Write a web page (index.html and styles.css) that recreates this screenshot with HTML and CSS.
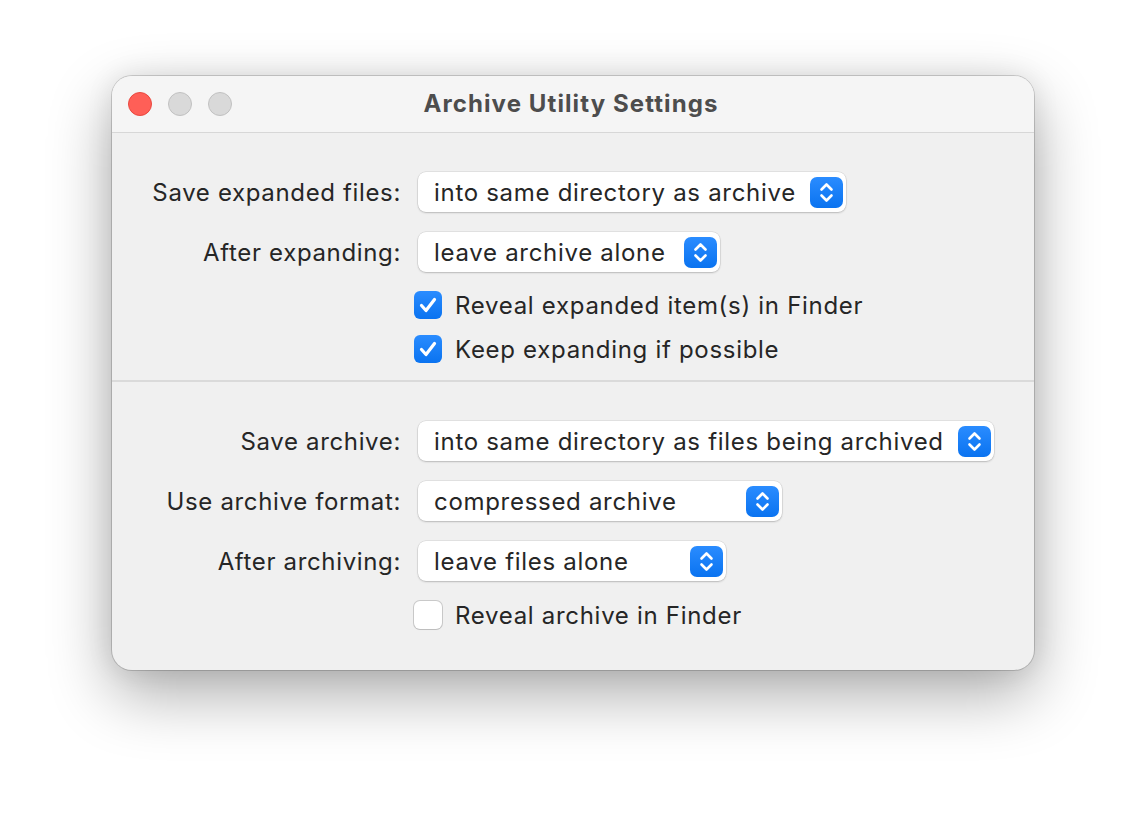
FILE: index.html
```html
<!DOCTYPE html>
<html>
<head>
<meta charset="utf-8">
<link rel="stylesheet" href="styles.css">
</head>
<body>
<div class="window">
  <div class="titlebar">
    <div class="lights">
      <span class="light red"></span>
      <span class="light grey"></span>
      <span class="light grey"></span>
    </div>
    <div class="title">Archive Utility Settings</div>
  </div>
  <div class="section first">
    <div class="row">
      <div class="label">Save expanded files:</div>
      <div class="popup w1"><span class="ptext">into same directory as archive</span><span class="stepper"><svg width="33" height="31" viewBox="0 0 33 31"><path d="M11.5 12.5 L16.5 7.5 L21.5 12.5 M11.5 18.5 L16.5 23.5 L21.5 18.5" fill="none" stroke="#fff" stroke-width="2.6" stroke-linecap="round" stroke-linejoin="round"/></svg></span></div>
    </div>
    <div class="row">
      <div class="label">After expanding:</div>
      <div class="popup w2"><span class="ptext">leave archive alone</span><span class="stepper"><svg width="33" height="31" viewBox="0 0 33 31"><path d="M11.5 12.5 L16.5 7.5 L21.5 12.5 M11.5 18.5 L16.5 23.5 L21.5 18.5" fill="none" stroke="#fff" stroke-width="2.6" stroke-linecap="round" stroke-linejoin="round"/></svg></span></div>
    </div>
    <div class="crow c1">
      <div class="label"></div>
      <div class="check on"><svg width="28" height="28" viewBox="0 0 28 28"><path d="M7.5 14.5 L12 19.5 L20.5 8.5" fill="none" stroke="#fff" stroke-width="3.2" stroke-linecap="round" stroke-linejoin="round"/></svg></div>
      <div class="ctext">Reveal expanded item(s) in Finder</div>
    </div>
    <div class="crow">
      <div class="label"></div>
      <div class="check on"><svg width="28" height="28" viewBox="0 0 28 28"><path d="M7.5 14.5 L12 19.5 L20.5 8.5" fill="none" stroke="#fff" stroke-width="3.2" stroke-linecap="round" stroke-linejoin="round"/></svg></div>
      <div class="ctext">Keep expanding if possible</div>
    </div>
  </div>
  <div class="divider"></div>
  <div class="section second">
    <div class="row">
      <div class="label">Save archive:</div>
      <div class="popup w3"><span class="ptext">into same directory as files being archived</span><span class="stepper"><svg width="33" height="31" viewBox="0 0 33 31"><path d="M11.5 12.5 L16.5 7.5 L21.5 12.5 M11.5 18.5 L16.5 23.5 L21.5 18.5" fill="none" stroke="#fff" stroke-width="2.6" stroke-linecap="round" stroke-linejoin="round"/></svg></span></div>
    </div>
    <div class="row">
      <div class="label">Use archive format:</div>
      <div class="popup w4"><span class="ptext">compressed archive</span><span class="stepper"><svg width="33" height="31" viewBox="0 0 33 31"><path d="M11.5 12.5 L16.5 7.5 L21.5 12.5 M11.5 18.5 L16.5 23.5 L21.5 18.5" fill="none" stroke="#fff" stroke-width="2.6" stroke-linecap="round" stroke-linejoin="round"/></svg></span></div>
    </div>
    <div class="row">
      <div class="label">After archiving:</div>
      <div class="popup w5"><span class="ptext">leave files alone</span><span class="stepper"><svg width="33" height="31" viewBox="0 0 33 31"><path d="M11.5 12.5 L16.5 7.5 L21.5 12.5 M11.5 18.5 L16.5 23.5 L21.5 18.5" fill="none" stroke="#fff" stroke-width="2.6" stroke-linecap="round" stroke-linejoin="round"/></svg></span></div>
    </div>
    <div class="crow">
      <div class="label"></div>
      <div class="check off"></div>
      <div class="ctext">Reveal archive in Finder</div>
    </div>
  </div>
</div>
</body>
</html>
```

FILE: styles.css
```css
html, body {
  margin: 0;
  padding: 0;
  background: #ffffff;
}
body {
  font-family: Inter, "Liberation Sans", sans-serif;
  color: #262626;
  padding: 76px 0 0 112px;
  height: 818px;
  box-sizing: border-box;
  overflow: hidden;
}
.window {
  width: 922px;
  height: 594px;
  box-sizing: border-box;
  border-radius: 20px;
  background: #f0f0f0;
  overflow: hidden;
  box-shadow: 0 0 0 1px rgba(0,0,0,0.16), 0 24px 64px rgba(0,0,0,0.33), 0 0 28px rgba(0,0,0,0.09);
}
.titlebar {
  height: 56px;
  background: #f5f5f5;
  border-bottom: 1px solid #d7d7d7;
  position: relative;
  display: flex;
  align-items: center;
  justify-content: center;
}
.lights {
  position: absolute;
  left: 16px;
  top: 16px;
  display: flex;
  gap: 16px;
}
.light {
  width: 24px;
  height: 24px;
  border-radius: 50%;
  box-sizing: border-box;
}
.light.red {
  background: #ff5f57;
  border: 1px solid #e9483f;
}
.light.grey {
  background: #d9d9d9;
  border: 1px solid #c1c1c1;
}
.title {
  font-weight: 700;
  font-size: 24px;
  color: #4d4d4d;
  margin-left: -4px;
  margin-top: -2px;
  letter-spacing: 1.1px;
}
.section {
  display: flex;
  flex-direction: column;
}
.section.first {
  padding: 39px 0 17px 0;
  gap: 20px;
}
.section.second {
  padding: 39px 0 0 0;
  gap: 20px;
}
.section.first .crow { margin-top: -4px; }
.section.first .crow.c1 { margin-top: -1px; }
.divider {
  height: 2px;
  background: #dadada;
}
.row, .crow {
  display: flex;
  align-items: center;
}
.label {
  width: 289px;
  text-align: right;
  font-size: 24px;
  margin-right: 17px;
  flex: none;
  letter-spacing: 0.65px;
}
.popup {
  height: 40px;
  box-sizing: border-box;
  background: #ffffff;
  border-radius: 8px;
  box-shadow: 0 0 0 0.5px rgba(0,0,0,0.12), 0 1px 2px rgba(0,0,0,0.18);
  display: flex;
  align-items: center;
  padding-left: 16px;
  padding-right: 3px;
}
.ptext {
  font-size: 24px;
  flex: 1;
  white-space: nowrap;
  letter-spacing: 0.7px;
}
.stepper {
  width: 33px;
  height: 31px;
  border-radius: 7px;
  background: linear-gradient(#2a8cff, #0a73f0);
  display: flex;
  flex: none;
}
.w1 { width: 428px; }
.w2 { width: 302px; }
.w3 { width: 576px; }
.w4 { width: 364px; }
.w5 { width: 308px; }
.crow {
  height: 28px;
}
.check {
  width: 28px;
  height: 28px;
  box-sizing: border-box;
  border-radius: 6px;
  margin-left: -4px;
  flex: none;
  display: flex;
}
.check.on {
  background: linear-gradient(#2a8cff, #0a73f0);
}
.check.off {
  background: #ffffff;
  box-shadow: 0 0 0 1px rgba(0,0,0,0.16), 0 1px 1px rgba(0,0,0,0.06);
}
.ctext {
  font-size: 24px;
  margin-left: 13px;
  letter-spacing: 0.7px;
}
```
